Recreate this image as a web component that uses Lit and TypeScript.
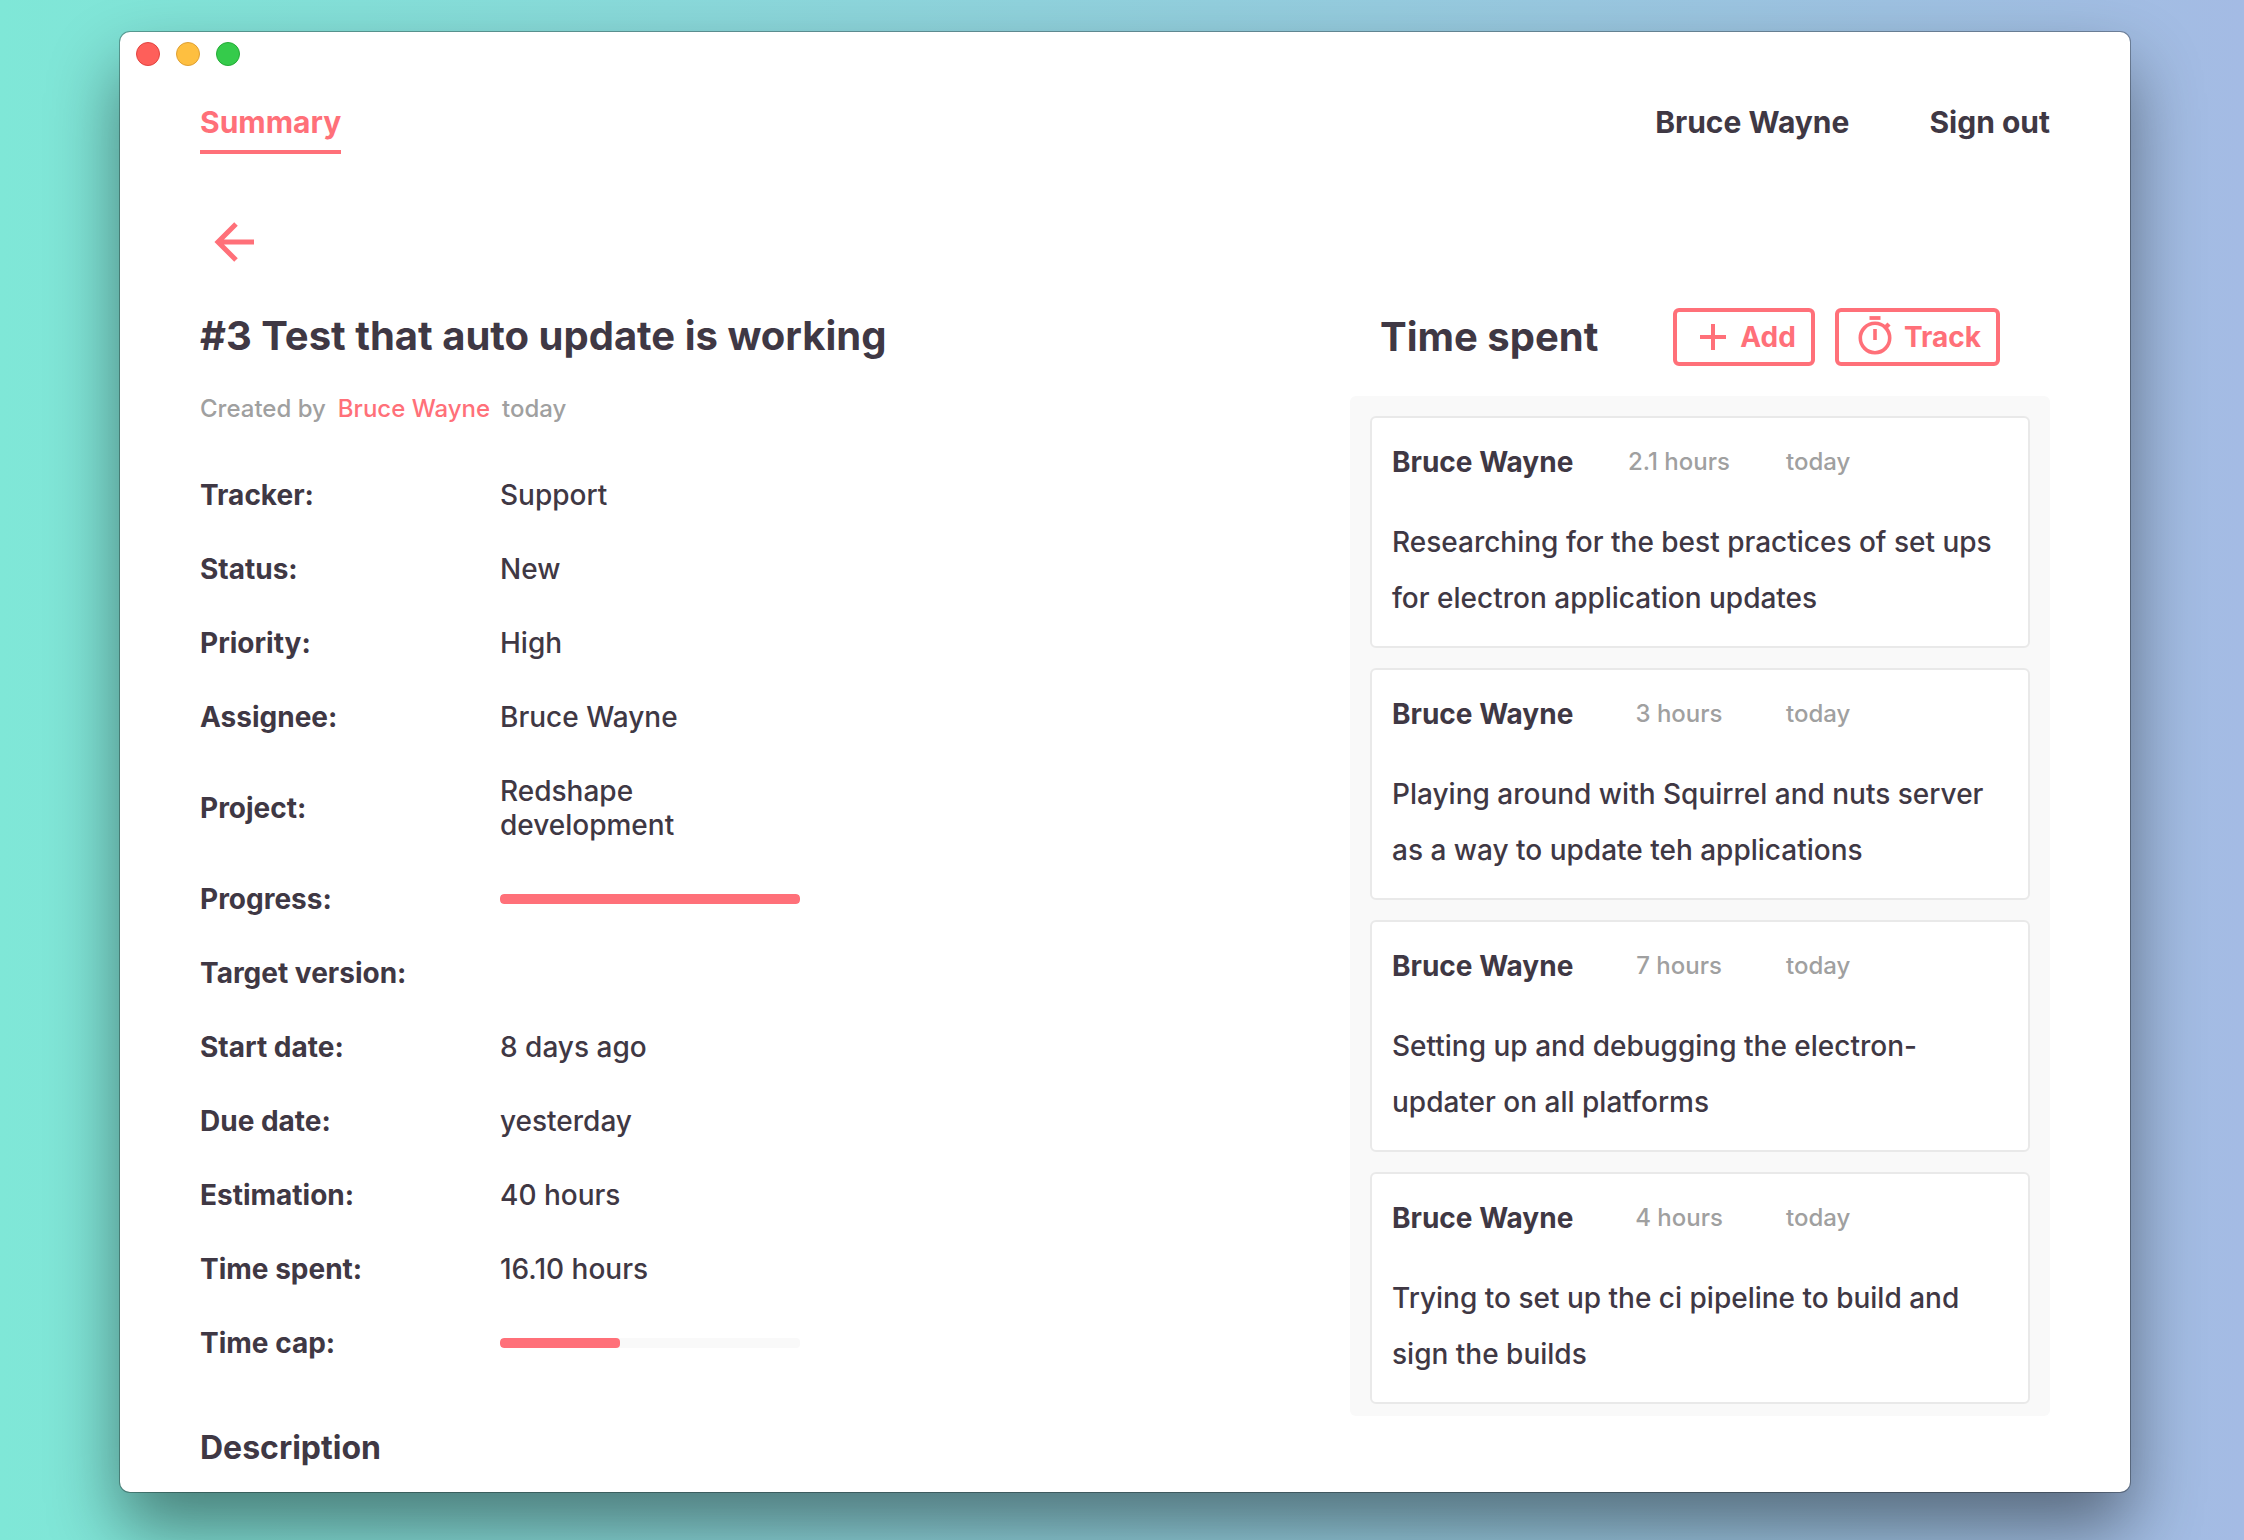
import { LitElement, html, css, svg, nothing } from "lit";
import { customElement, property } from "lit/decorators.js";

interface Field {
  label: string;
  value?: string;
  progress?: number;
}

interface TimeEntry {
  user: string;
  hours: string;
  date: string;
  comment: string;
}

const FIELDS: Field[] = [
  { label: "Tracker:", value: "Support" },
  { label: "Status:", value: "New" },
  { label: "Priority:", value: "High" },
  { label: "Assignee:", value: "Bruce Wayne" },
  { label: "Project:", value: "Redshape development" },
  { label: "Progress:", progress: 100 },
  { label: "Target version:", value: "" },
  { label: "Start date:", value: "8 days ago" },
  { label: "Due date:", value: "yesterday" },
  { label: "Estimation:", value: "40 hours" },
  { label: "Time spent:", value: "16.10 hours" },
  { label: "Time cap:", progress: 40 },
];

const ENTRIES: TimeEntry[] = [
  { user: "Bruce Wayne", hours: "2.1 hours", date: "today", comment: "Researching for the best practices of set ups for electron application updates" },
  { user: "Bruce Wayne", hours: "3 hours", date: "today", comment: "Playing around with Squirrel and nuts server as a way to update teh applications" },
  { user: "Bruce Wayne", hours: "7 hours", date: "today", comment: "Setting up and debugging the electron-updater on all platforms" },
  { user: "Bruce Wayne", hours: "4 hours", date: "today", comment: "Trying to set up the ci pipeline to build and sign the builds" },
];

const arrowIcon = svg`<path d="M22 2 L4 20 L22 38 M4 20 H40" fill="none" stroke="currentColor" stroke-width="5"/>`;
const plusIcon = svg`<path d="M13 0 V26 M0 13 H26" fill="none" stroke="currentColor" stroke-width="4"/>`;
const stopwatchIcon = svg`
  <g fill="none" stroke="currentColor">
    <circle cx="17" cy="22" r="14.7" stroke-width="3.6"/>
    <path d="M11.5 2 H22.5" stroke-width="3.8"/>
    <path d="M17 13 V24" stroke-width="3.6"/>
    <path d="M27 12 L31 8" stroke-width="4.4"/>
  </g>`;

@customElement("progress-bar")
class ProgressBar extends LitElement {
  @property({ type: Number }) value = 0;
  @property() label = "";

  static styles = css`
    :host {
      display: block;
    }
    .track {
      height: 10px;
      border-radius: 4px;
      background: #f9f9f9;
      overflow: hidden;
    }
    .fill {
      height: 100%;
      border-radius: 4px;
      background: #ff7079;
    }
  `;

  render() {
    return html`<div class="track" role="progressbar" aria-label=${this.label} aria-valuenow=${this.value}>
      <div class="fill" style="width:${this.value}%"></div>
    </div>`;
  }
}

@customElement("time-entry")
class TimeEntryCard extends LitElement {
  @property({ attribute: false }) entry!: TimeEntry;

  static styles = css`
    :host {
      display: block;
    }
    .card {
      padding: 20px;
      border: 2px solid #e9e9e9;
      border-radius: 6px;
      background: #fff;
    }
    .head {
      display: grid;
      grid-template-columns: 200px 150px 1fr;
      align-items: center;
      gap: 12px;
      line-height: 48px;
    }
    .user {
      font-weight: 700;
    }
    .meta {
      color: #a0a0a0;
      font-size: 24px;
      font-weight: 500;
    }
    .hours {
      text-align: center;
    }
    .date {
      padding-left: 20px;
    }
    .comment {
      margin: 28px 0 0;
      line-height: 56px;
    }
  `;

  render() {
    const { user, hours, date, comment } = this.entry;
    return html`<article class="card">
      <div class="head">
        <span class="user">${user}</span>
        <span class="meta hours">${hours}</span>
        <span class="meta date">${date}</span>
      </div>
      <p class="comment">${comment}</p>
    </article>`;
  }
}

@customElement("app-root")
class AppRoot extends LitElement {
  static styles = css`
    :host {
      display: block;
      box-sizing: border-box;
      min-height: 100vh;
      padding: 32px 114px 48px 120px;
      overflow: hidden;
      background: linear-gradient(90deg, #7fe7d7, #a4bbe4);
      color: #3f3844;
      font-family: Inter, "Liberation Sans", sans-serif;
      font-size: 28px;
      font-weight: 500;
      line-height: 34px;
    }
    .window {
      min-height: calc(100vh - 80px);
      box-sizing: border-box;
      border-radius: 10px;
      background: #fff;
      box-shadow: 0 0 0 1px rgba(0, 0, 0, 0.3), 0 36px 70px rgba(0, 0, 0, 0.45);
    }
    .lights {
      display: flex;
      gap: 16px;
      padding: 10px 16px;
    }
    .light {
      width: 24px;
      height: 24px;
      box-sizing: border-box;
      border-radius: 50%;
      border: 1px solid;
    }
    .close {
      background: #fe5f5a;
      border-color: #e2433f;
    }
    .minimize {
      background: #febf40;
      border-color: #dfa033;
    }
    .zoom {
      background: #35cb4b;
      border-color: #24ab36;
    }
    .content {
      padding: 22px 80px 0;
    }
    nav {
      display: flex;
      justify-content: space-between;
      font-size: 30px;
      font-weight: 700;
    }
    .account {
      display: flex;
      gap: 80px;
    }
    a {
      color: inherit;
      text-decoration: none;
    }
    .nav-link {
      padding: 6px 0 10px;
      border-bottom: 4px solid transparent;
      line-height: 36px;
    }
    .active {
      color: #ff7079;
      border-color: #ff7079;
    }
    button {
      margin: 0;
      background: transparent;
      color: #ff7079;
      font: inherit;
      font-weight: 700;
    }
    .back {
      display: flex;
      margin: 60px 0 0 14px;
      padding: 8px 0;
      border: 0;
    }
    .back-icon {
      width: 42px;
      height: 40px;
    }
    .columns {
      display: grid;
      grid-template-columns: minmax(0, 1fr) 700px;
      gap: 60px;
      margin-top: 38px;
    }
    h1,
    h2 {
      margin: 0;
      font-size: 40px;
      line-height: 56px;
      font-weight: 700;
    }
    .created {
      display: flex;
      gap: 12px;
      margin: 28px 0 0;
      color: #a0a0a0;
      font-size: 24px;
    }
    .author {
      color: #ff7079;
    }
    dl {
      margin: 32px 0 0;
    }
    .field {
      display: grid;
      grid-template-columns: 300px 300px;
      align-items: center;
      padding: 20px 0;
    }
    dt {
      font-weight: 700;
    }
    dd {
      min-height: 34px;
      margin: 0;
    }
    .text {
      padding-right: 40px;
    }
    .bar {
      display: grid;
      align-items: center;
    }
    h3 {
      margin: 48px 0 0;
      font-size: 32px;
      line-height: 40px;
      font-weight: 700;
    }
    .spent-head {
      display: flex;
      align-items: center;
      justify-content: space-between;
      padding: 0 50px 0 30px;
    }
    .actions {
      display: flex;
      gap: 20px;
    }
    .action {
      display: flex;
      align-items: center;
      height: 58px;
      padding: 0 15px;
      border: 4px solid #ff7079;
      border-radius: 6px;
    }
    .plus {
      width: 26px;
      height: 26px;
      margin: 0 14px 0 8px;
    }
    .watch {
      width: 34px;
      height: 42px;
      margin: 0 12px 0 4px;
    }
    .entries {
      display: grid;
      gap: 20px;
      margin-top: 30px;
      padding: 20px 20px 12px;
      border-radius: 6px;
      background: #f9f9f9;
    }
  `;

  render() {
    return html`<div class="window">
      <div class="lights">
        <span class="light close"></span>
        <span class="light minimize"></span>
        <span class="light zoom"></span>
      </div>
      <div class="content">
        <nav>
          <a class="nav-link active" href="#summary">Summary</a>
          <div class="account">
            <a class="nav-link" href="#profile">Bruce Wayne</a>
            <a class="nav-link" href="#signout">Sign out</a>
          </div>
        </nav>
        <button class="back" aria-label="Back">
          <svg class="back-icon" viewBox="0 0 42 40">${arrowIcon}</svg>
        </button>
        <div class="columns">
          <main>
            <h1>#3 Test that auto update is working</h1>
            <p class="created">
              <span>Created by</span>
              <a class="author" href="#user">Bruce Wayne</a>
              <span>today</span>
            </p>
            <dl>
              ${FIELDS.map(
                (f) => html`<div class="field">
                  <dt>${f.label}</dt>
                  ${f.progress === undefined
                    ? html`<dd class="text">${f.value || nothing}</dd>`
                    : html`<dd class="bar"><progress-bar .value=${f.progress} .label=${f.label}></progress-bar></dd>`}
                </div>`
              )}
            </dl>
            <h3>Description</h3>
          </main>
          <aside>
            <div class="spent-head">
              <h2>Time spent</h2>
              <div class="actions">
                <button class="action"><svg class="plus" viewBox="0 0 26 26">${plusIcon}</svg>Add</button>
                <button class="action"><svg class="watch" viewBox="0 0 34 42">${stopwatchIcon}</svg>Track</button>
              </div>
            </div>
            <div class="entries">
              ${ENTRIES.map((e) => html`<time-entry .entry=${e}></time-entry>`)}
            </div>
          </aside>
        </div>
      </div>
    </div>`;
  }
}
